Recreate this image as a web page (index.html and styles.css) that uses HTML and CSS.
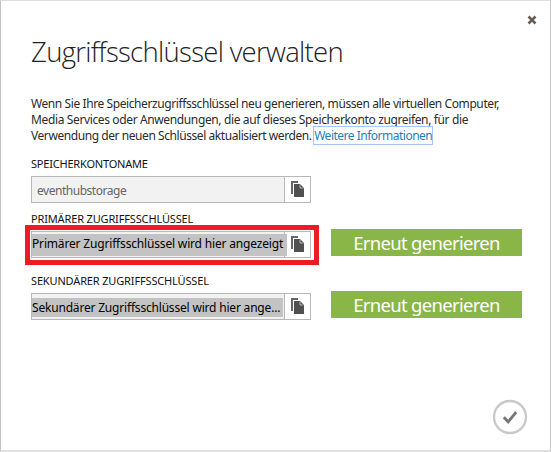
FILE: index.html
```html
<!DOCTYPE html>
<html lang="de">
<head>
<meta charset="utf-8">
<title>Zugriffsschlüssel verwalten</title>
<link rel="stylesheet" href="styles.css">
</head>
<body>
<svg width="0" height="0" class="defs" aria-hidden="true">
  <symbol id="copy" viewBox="0 0 13 16">
    <path d="M0 0h7v2H2v11H0z" fill="#666"/>
    <path d="M3 3h6v4h4v9H3z" fill="#505050"/>
    <path d="M9 3l4 4H9z" fill="#505050"/>
    <path d="M9 3.500V7h3.500" fill="none" stroke="#ddd" stroke-width=".7"/>
  </symbol>
</svg>
<main class="dialog">
  <button class="close" aria-label="Schließen">
    <svg width="10" height="10" viewBox="0 0 10 10"><path d="M1.500 1.500l7 7M8.500 1.500l-7 7" stroke="#665f57" stroke-width="2.600"/></svg>
  </button>
  <h1 class="title">Zugriffsschlüssel verwalten</h1>
  <p class="intro">
    <span class="line line-1">Wenn Sie Ihre Speicherzugriffsschlüssel neu generieren, müssen alle virtuellen Computer,</span>
    <span class="line line-2">Media Services oder Anwendungen, die auf dieses Speicherkonto zugreifen, für die</span>
    <span class="line line-3">Verwendung der neuen Schlüssel aktualisiert werden. <a class="link" href="#">Weitere Informationen</a></span>
  </p>
  <section class="field">
    <div class="label label-1">SPEICHERKONTONAME</div>
    <div class="row">
      <div class="box"><span class="value name">eventhubstorage</span><button class="copy" aria-label="Kopieren"><svg width="13" height="16"><use href="#copy"/></svg></button></div>
    </div>
  </section>
  <section class="field">
    <div class="label label-2">PRIMÄRER ZUGRIFFSSCHLÜSSEL</div>
    <div class="row">
      <div class="box"><span class="value"><span class="key primary">Primärer Zugriffsschlüssel wird hier angezeigt</span></span><button class="copy" aria-label="Kopieren"><svg width="13" height="16"><use href="#copy"/></svg></button><span class="highlight"></span></div>
      <button class="regen">Erneut generieren</button>
    </div>
  </section>
  <section class="field last">
    <div class="label label-3">SEKUNDÄRER ZUGRIFFSSCHLÜSSEL</div>
    <div class="row">
      <div class="box"><span class="value"><span class="key secondary">Sekundärer Zugriffsschlüssel wird hier ange...</span></span><button class="copy" aria-label="Kopieren"><svg width="13" height="16"><use href="#copy"/></svg></button></div>
      <button class="regen">Erneut generieren</button>
    </div>
  </section>
  <button class="confirm" aria-label="OK">
    <svg width="36" height="36" viewBox="0 0 36 36"><circle cx="18" cy="18" r="16" fill="#fff" stroke="#c8c8c8" stroke-width="2.300"/><path d="M11.800 18.200l4.400 4.600 8-9.600" fill="none" stroke="#757575" stroke-width="2.800"/></svg>
  </button>
</main>
</body>
</html>
```
FILE: styles.css
```css
* { box-sizing: border-box; }
body { margin: 0; background: #fff; font: 12px/16px "Noto Sans", "Open Sans", sans-serif; color: #2b2b2b; }
button { font: inherit; margin: 0; padding: 0; border: 0; background: none; }
svg { display: block; }
.defs { position: absolute; }
.dialog {
  position: relative;
  width: 551px;
  height: 452px;
  padding: 31px 0 0 30px;
  border: solid #c3c3c3;
  border-width: 1px 1px 2px;
  border-top-color: #dedede;
  border-bottom-color: #e0e0e0;
  white-space: nowrap;
}
.close { position: absolute; left: 526px; top: 14px; }
.title { margin: 0 0 24px; font: 300 27.5px/40px "Open Sans", sans-serif; color: #222; letter-spacing: -0.7px; }
.intro { margin: 0 0 12px; }
.line { display: block; height: 16px; letter-spacing: -0.41px; }
.line-2 { letter-spacing: -0.37px; }
.line-3 { letter-spacing: -0.43px; }
.link { color: #1f7fb8; text-decoration: none; letter-spacing: -0.5px; outline: 1px solid #a3c3fa; }
.field { height: 47px; margin-bottom: 8px; }
.field + .field { margin-bottom: 15px; }
.label { height: 20px; font-size: 11px; color: #111; letter-spacing: -0.2px; }
.label-2, .label-3 { letter-spacing: -0.15px; }
.row { display: flex; gap: 20px; align-items: flex-start; }
.box { position: relative; display: flex; width: 280px; height: 27px; border: 1px solid #b8b8b8; }
.value { width: 252px; height: 25px; background: #f2f2f2; line-height: 28px; }
.name { padding-left: 5px; color: #666; letter-spacing: -0.47px; }
.key { position: relative; display: block; width: 251px; height: 19px; margin-top: 4px; background: #c3c3c3; color: #000; line-height: 19px; letter-spacing: -0.19px; }
.primary { z-index: 1; width: 255px; height: 22px; margin-top: 2px; line-height: 20px; letter-spacing: -0.17px; }
.copy { display: flex; align-items: flex-start; flex: 1; border-left: 1px solid #b8b8b8; padding: 4px 0 0 6px; background: #fff; }
.highlight { position: absolute; left: -7px; top: -7px; width: 294px; height: 40px; border: 5px solid #ed1c24; z-index: 2; }
.regen { width: 191px; height: 27px; margin-top: -2px; background: #8ab547; color: #fff; font: 18.5px/27px "Noto Sans", sans-serif; letter-spacing: -0.7px; }
.confirm { position: absolute; left: 491px; top: 398px; }
```
